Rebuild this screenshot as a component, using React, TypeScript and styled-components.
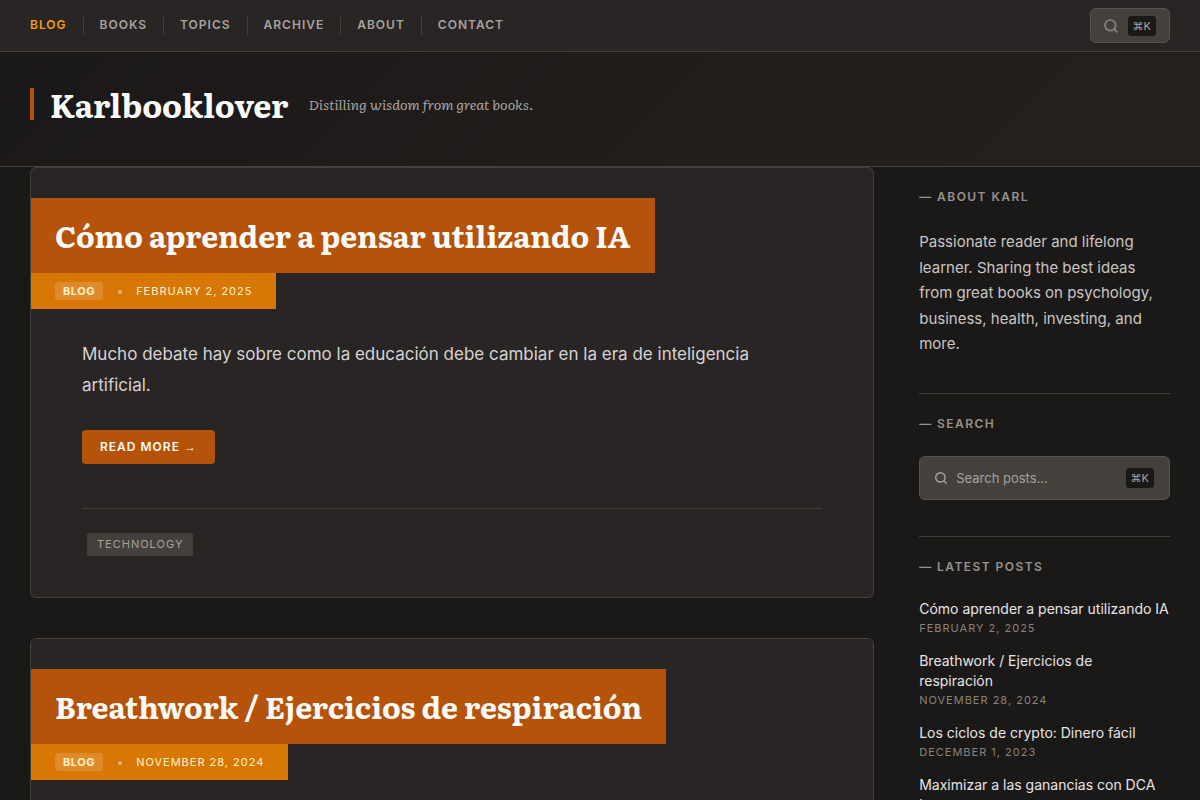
import React from "react";
import styled, { createGlobalStyle } from "styled-components";
import { Search } from "lucide-react";

const serif = `Literata, "DejaVu Serif Condensed", "DejaVu Serif", serif`;

const GlobalStyle = createGlobalStyle`
  *, *::before, *::after { box-sizing: border-box; }
  html { scrollbar-width: none; }
  body {
    margin: 0;
    background: #1b1918;
    color: #d6d3d1;
    font-family: Inter, "Liberation Sans", sans-serif;
    font-optical-sizing: none;
  }
  h1, h2, h3, p, ul { margin: 0; padding: 0; }
  ul { list-style: none; }
  a { color: inherit; text-decoration: none; }
`;

const NavBar = styled.nav`
  display: flex;
  align-items: center;
  justify-content: space-between;
  padding: 8px 30px;
  background: #292524;
  border-bottom: 1px solid #44403c;
`;

const NavList = styled.ul`
  display: flex;
`;

const NavItem = styled.li`
  display: flex;
  padding: 0 16px 2px;
  border-left: 1px solid #44403c;
  &:first-child {
    padding-left: 0;
    border-left: 0;
  }
`;

const NavLink = styled.a<{ $active?: boolean }>`
  font-size: 12px;
  font-weight: 600;
  line-height: 16px;
  letter-spacing: 1px;
  text-transform: uppercase;
  color: ${(p) => (p.$active ? "#f59e0b" : "#a8a29e")};
`;

const SearchButton = styled.button`
  display: flex;
  align-items: center;
  gap: 9px;
  height: 35px;
  padding: 0 13px 0 12px;
  background: #44403c;
  border: 1px solid #57534e;
  border-radius: 6px;
  color: #8a837e;
`;

const Kbd = styled.kbd`
  padding: 0 5px;
  background: #1b1918;
  border-radius: 3px;
  color: #a8a29e;
  font-family: Inter, "Liberation Sans", sans-serif;
  font-size: 11px;
  line-height: 20px;
`;

const Masthead = styled.header`
  display: flex;
  align-items: flex-start;
  gap: 20px;
  padding: 32px 30px 42px;
  background: linear-gradient(135deg, #1b1918 0%, #25211f 100%);
  border-bottom: 1px solid #44403c;
`;

const SiteTitle = styled.h1`
  display: flex;
  gap: 16px;
  color: #fafaf9;
  font-family: ${serif};
  font-size: 32px;
  font-weight: 700;
  line-height: 40px;
  &::before {
    content: "";
    width: 4px;
    height: 32px;
    margin-top: 4px;
    background: #b45309;
  }
`;

const Tagline = styled.p`
  color: #a8a29e;
  font-family: ${serif};
  font-size: 14px;
  font-style: italic;
  line-height: 40px;
`;

const Layout = styled.div`
  display: flex;
  align-items: flex-start;
  gap: 45px;
  padding: 0 30px;
`;

const Posts = styled.main`
  flex: 1;
  display: flex;
  flex-direction: column;
  gap: 40px;
  padding-bottom: 40px;
`;

const Card = styled.article`
  display: flex;
  flex-direction: column;
  align-items: flex-start;
  padding: 30px 0 41px;
  background: #292524;
  border: 1px solid #44403c;
  border-radius: 6px;
`;

const CardTitle = styled.h2`
  padding: 16px 24px 17px;
  background: #b45309;
  color: #fafaf9;
  font-family: ${serif};
  font-size: 30px;
  font-weight: 700;
  line-height: 42px;
`;

const Meta = styled.div`
  display: flex;
  align-items: center;
  padding: 9px 24px;
  background: #d97706;
  color: #fef3c7;
  font-size: 11px;
  line-height: 18px;
  letter-spacing: 1px;
  text-transform: uppercase;
`;

const Category = styled.a`
  padding: 0 8px;
  background: rgba(255, 255, 255, 0.15);
  border-radius: 3px;
  font-weight: 700;
  letter-spacing: 0.05em;
`;

const Dot = styled.span`
  width: 4px;
  height: 4px;
  margin: 2px 14px 0 15px;
  border-radius: 50%;
  background: rgba(255, 255, 255, 0.45);
`;

const CardBody = styled.div`
  align-self: stretch;
  padding: 30px 51px 0;
`;

const Excerpt = styled.p`
  color: #d6d3d1;
  font-size: 17px;
  line-height: 31px;
`;

const ReadMore = styled.a`
  display: inline-block;
  margin: 29px 0 44px;
  padding: 0 18px;
  background: #b45309;
  border-radius: 4px;
  color: #fafaf9;
  font-size: 12px;
  font-weight: 600;
  line-height: 34px;
  letter-spacing: 1px;
  text-transform: uppercase;
`;

const Arrow = styled.span`
  font-family: "Liberation Sans", sans-serif;
`;

const Tags = styled.ul`
  display: flex;
  padding: 24px 5px 0;
  border-top: 1px solid #44403c;
`;

const Tag = styled.a`
  display: block;
  padding: 0 10px;
  background: #44403c;
  border-radius: 2px;
  color: #a8a29e;
  font-size: 11px;
  line-height: 23px;
  letter-spacing: 1px;
  text-transform: uppercase;
`;

const Sidebar = styled.aside`
  width: 22%;
`;

const Widget = styled.section`
  padding: 20px 0 36px;
  border-bottom: 1px solid #44403c;
`;

const WidgetTitle = styled.h3`
  margin-bottom: 22px;
  color: #98928d;
  font-size: 12px;
  font-weight: 600;
  line-height: 20px;
  letter-spacing: 0.12em;
  text-transform: uppercase;
  &::before {
    content: "— ";
  }
`;

const About = styled.p`
  color: #c9c5c2;
  font-size: 15px;
  line-height: 1.7;
`;

const SearchBox = styled.label`
  display: flex;
  align-items: center;
  gap: 8px;
  height: 44px;
  padding: 0 15px 0 14px;
  background: #44403c;
  border: 1px solid #57534e;
  border-radius: 6px;
  color: #a8a29e;
`;

const SearchInput = styled.input`
  flex: 1;
  min-width: 0;
  padding: 0;
  background: none;
  border: 0;
  outline: 0;
  color: #fafaf9;
  font-family: inherit;
  font-size: 13px;
  &::placeholder {
    color: #a8a29e;
    opacity: 1;
  }
`;

const Latest = styled.ul`
  display: flex;
  flex-direction: column;
  gap: 14px;
`;

const LatestLink = styled.a`
  display: block;
  color: #e7e5e4;
  font-size: 14px;
  line-height: 20px;
`;

const LatestDate = styled.time`
  display: block;
  color: #8a827c;
  font-size: 11px;
  line-height: 18px;
  letter-spacing: 1px;
  text-transform: uppercase;
`;

const sections = ["Blog", "Books", "Topics", "Archive", "About", "Contact"];

const posts = [
  {
    title: "Cómo aprender a pensar utilizando IA",
    date: "February 2, 2025",
    excerpt:
      "Mucho debate hay sobre como la educación debe cambiar en la era de inteligencia artificial.",
    tag: "Technology",
  },
  {
    title: "Breathwork / Ejercicios de respiración",
    date: "November 28, 2024",
    excerpt: "",
    tag: "",
  },
];

const latest = [
  { title: "Cómo aprender a pensar utilizando IA", date: "February 2, 2025" },
  { title: "Breathwork / Ejercicios de respiración", date: "November 28, 2024" },
  { title: "Los ciclos de crypto: Dinero fácil", date: "December 1, 2023" },
  { title: "Maximizar a las ganancias con DCA bots", date: "" },
];

export default function App() {
  return (
    <>
      <GlobalStyle />
      <NavBar>
        <NavList>
          {sections.map((name, i) => (
            <NavItem key={name}>
              <NavLink href="#" $active={i === 0}>{name}</NavLink>
            </NavItem>
          ))}
        </NavList>
        <SearchButton type="button" aria-label="Search">
          <Search size={16} strokeWidth={2.5} />
          <Kbd>⌘K</Kbd>
        </SearchButton>
      </NavBar>
      <Masthead>
        <SiteTitle><a href="#">Karlbooklover</a></SiteTitle>
        <Tagline>Distilling wisdom from great books.</Tagline>
      </Masthead>
      <Layout>
        <Posts>
          {posts.map((post) => (
            <Card key={post.title}>
              <CardTitle><a href="#">{post.title}</a></CardTitle>
              <Meta>
                <Category href="#">Blog</Category>
                <Dot />
                <time>{post.date}</time>
              </Meta>
              <CardBody>
                {post.excerpt && <Excerpt>{post.excerpt}</Excerpt>}
                {post.excerpt && <ReadMore href="#">Read more <Arrow>→</Arrow></ReadMore>}
                {post.tag && (
                  <Tags>
                    <li><Tag href="#">{post.tag}</Tag></li>
                  </Tags>
                )}
              </CardBody>
            </Card>
          ))}
        </Posts>
        <Sidebar>
          <Widget>
            <WidgetTitle>About Karl</WidgetTitle>
            <About>
              Passionate reader and lifelong learner. Sharing the best ideas from great books on
              psychology, business, health, investing, and more.
            </About>
          </Widget>
          <Widget>
            <WidgetTitle>Search</WidgetTitle>
            <SearchBox>
              <Search size={14} strokeWidth={2.5} />
              <SearchInput type="text" placeholder="Search posts..." aria-label="Search posts" />
              <Kbd>⌘K</Kbd>
            </SearchBox>
          </Widget>
          <Widget>
            <WidgetTitle>Latest Posts</WidgetTitle>
            <Latest>
              {latest.map((post) => (
                <li key={post.title}>
                  <LatestLink href="#">{post.title}</LatestLink>
                  {post.date && <LatestDate>{post.date}</LatestDate>}
                </li>
              ))}
            </Latest>
          </Widget>
        </Sidebar>
      </Layout>
    </>
  );
}
